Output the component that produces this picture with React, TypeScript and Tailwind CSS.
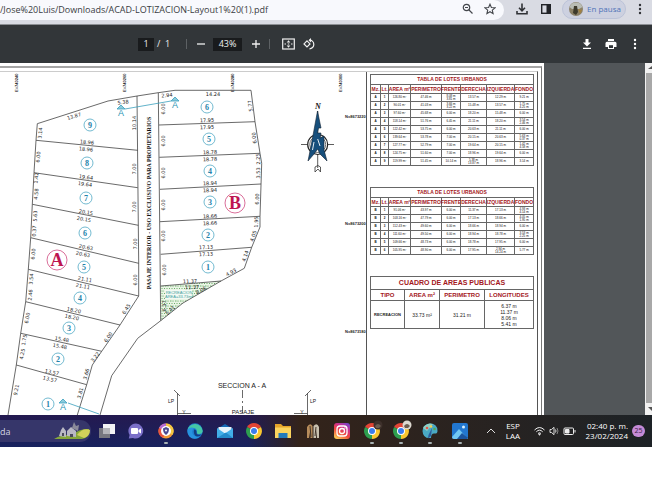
import React from "react";

/* ---------- site plan data ---------- */

type Dim = [number, number, string, number];

const dimensions: Dim[] = [
  [74, 116, "13.87", -18], [123, 102, "5.38", -8], [40, 133, "3.14", -86], [134, 123, "10.14", -90],
  [87, 142, "18.96", 5], [86, 149, "18.96", 5], [38, 157, "6.00", -86], [36, 178, "1.42", -86],
  [36, 194, "4.58", -86], [134, 169, "7.00", -90], [134, 207, "7.00", -90], [86, 177, "19.64", 7],
  [85, 184, "19.64", 7], [86, 212, "20.15", 10], [84, 219, "20.15", 10], [35, 216, "5.63", -87],
  [34, 231, "0.37", -87], [135, 244, "7.00", -90], [135, 280, "6.00", -90], [86, 247, "20.63", 11],
  [83, 254, "20.63", 11], [33, 254, "6.00", -86], [31, 279, "3.54", -86], [85, 279, "21.11", 12],
  [83, 286, "21.11", 12], [30, 295, "2.46", -84], [74, 310, "18.20", 12], [72, 317, "18.20", 12],
  [27, 318, "6.00", -80], [126, 309, "6.45", -57], [108, 337, "6.00", -55], [24, 340, "1.75", -80],
  [22, 354, "4.25", -80], [62, 339, "15.48", 10], [60, 346, "15.48", 10], [95, 357, "3.22", -52],
  [52, 372, "13.57", 13], [50, 379, "13.57", 13], [86, 374, "3.66", -74], [80, 393, "3.81", -74],
  [16, 390, "9.21", -80],
  [167, 95, "2.94", -4], [213, 94, "14.24", 0], [163, 109, "6.00", -90], [163, 141, "6.00", -90],
  [163, 173, "6.00", -90], [163, 205, "6.00", -90], [163, 236, "6.00", -90], [164, 270, "6.00", -90],
  [250, 106, "5.77", -98], [207, 120, "17.95", -2], [207, 127, "17.95", -2], [254, 138, "6.00", -98],
  [210, 152, "18.78", -2], [210, 159, "18.78", -2], [258, 159, "2.25", -93], [258, 173, "3.53", -90],
  [210, 183, "18.94", -2], [210, 190, "18.94", -2], [257, 199, "6.00", -88], [210, 216, "18.66", -2],
  [210, 223, "18.66", -2], [256, 222, "1.95", -88], [253, 236, "4.05", -72], [206, 247, "17.13", -3],
  [206, 254, "17.13", -3], [245, 256, "4.14", -72], [231, 272, "4.93", -28], [190, 281, "11.37", -3],
  [192, 287, "11.37", -3], [201, 290, "8.06", -28], [164, 306, "6.37", -90], [170, 310, "5.41", -42],
];

const lots: [number, number, string][] = [
  [90, 125, "9"], [87, 163, "8"], [86, 198, "7"], [85, 233, "6"], [84, 267, "5"],
  [80, 298, "4"], [69, 328, "3"], [58, 359, "2"], [48, 404, "1"],
  [207, 107, "6"], [209, 139, "5"], [210, 171, "4"], [210, 202, "3"], [208, 235, "2"], [208, 267, "1"],
];

const marks: [number, number][] = [[121, 107], [175, 99], [63, 401]];

function SitePlan() {
  return (
    <svg
      viewBox="0 72 366 343"
      className="h-[343px] w-[366px] shrink-0"
      role="img"
      aria-label="Plano de lotización"
      fill="none"
      stroke="#444"
      strokeWidth="0.8"
    >
      <defs>
        <pattern id="grass" width="5" height="5" patternUnits="userSpaceOnUse">
          <rect width="5" height="5" fill="#eaf5e6" stroke="none" />
          <path d="M0 1h1.5M3 0.5v1.2M1.5 3l1 1M4 3.5h1" stroke="#4d9a4b" strokeWidth="0.8" />
        </pattern>
      </defs>

      {/* coordinate grid labels */}
      <g fontFamily="'Liberation Sans', Arial, sans-serif" fontSize="4" fill="#222" stroke="none" fontWeight="700">
        <text transform="translate(18 92) rotate(-90)">E=740240</text>
        <text transform="translate(126 92) rotate(-90)">E=740260</text>
        <text transform="translate(234 92) rotate(-90)">E=740280</text>
        <text transform="translate(342 92) rotate(-90)">E=740300</text>
        <text x="345" y="118">N=8673220</text>
        <text x="345" y="225">N=8673200</text>
        <text x="345" y="333">N=8673180</text>
      </g>

      {/* block A */}
      <path d="M8 415L16.300 365 20.700 333.300 25.700 301.700 28.300 269.300 30.700 237.700 32.300 204.300 34 172.700 36 140.300 37.300 123.700 108 101 137 96 158.300 92.700 175 90.300H251" />
      <path d="M137 96L138.700 263V296L120 325 101.700 351.300 92.300 365 86.700 384.700 77.300 415" />
      <path d="M36 140.300L137.700 150.300M34 172.700L137.700 187.700M32.300 204.300L138.300 225.300M30.700 237.700L138.700 263.300M28.300 269.300L138.700 296M25.700 301.700L120 325M20.700 333.300L101.700 351.300M16.300 365L86.700 384.700" />

      {/* recreation area */}
      <path d="M160.700 286L221 281 183 303 160.700 320.700Z" fill="url(#grass)" stroke="none" />
      <path d="M165 290H192V299H165Z" fill="#f4faf4" stroke="none" />

      {/* block B */}
      <path d="M251 90.300L255 121.700 260 153.300 261.700 163.300 260 216.700V227L251.700 247.300 244.300 268.300 221 281 183 303 160.700 320.700 137.700 338.300 111.700 375.700 100 415" />
      <path d="M158.300 92.700L160.700 320.700" />
      <path d="M159 125L255 121.700M159.300 157.300L260 153.300M160 189.300L261 184M160 221.700L260 216.300M160.700 254.300L251.700 247.300M160.700 286L221 281" />

      <g fontFamily="'DejaVu Sans', sans-serif" fontSize="5" fill="#1c1c1c" stroke="none" textAnchor="middle">
        {dimensions.map(([x, y, t, r], i) => (
          <text key={i} transform={`translate(${x} ${y}) rotate(${r})`} dy="2">
            {t}
          </text>
        ))}
      </g>

      <g fontFamily="'Liberation Sans', Arial, sans-serif" fontSize="4" fill="#3f9fa0" stroke="none" textAnchor="middle">
        <text x="179" y="294">RECREACION</text>
        <text x="179" y="298">AREA=33.73m²</text>
      </g>

      {/* lot numbers */}
      <g fontFamily="'Liberation Serif', 'Times New Roman', serif" fontSize="8" fontWeight="700" textAnchor="middle">
        {lots.map(([x, y, n], i) => (
          <g key={i}>
            <circle cx={x} cy={y} r="6" stroke="#4fa8c4" fill="#fff" />
            <text x={x} y={y + 3} fill="#2382aa" stroke="none">{n}</text>
          </g>
        ))}
        <g fontSize="18">
          <circle cx="57" cy="260" r="10" stroke="#cf4a80" />
          <circle cx="235" cy="203" r="10" stroke="#cf4a80" />
          <text x="57" y="266" fill="#be1550" stroke="none">A</text>
          <text x="235" y="209" fill="#be1550" stroke="none">B</text>
        </g>
      </g>

      {/* section marks */}
      <g stroke="#3a9fbc">
        <path d="M125 109L171 101M68 403L99 414" />
        {marks.map(([x, y], i) => (
          <g key={i}>
            <path d={`M${x - 4} ${y + 2}L${x} ${y - 2} ${x + 4} ${y + 2}Z`} fill="#8ccbdc" />
            <text
              x={x} y={y + 9} textAnchor="middle" fill="#2a93b3" stroke="none"
              fontFamily="'Liberation Sans', Arial, sans-serif" fontSize="9"
            >
              A
            </text>
          </g>
        ))}
      </g>

      <text
        transform="translate(151 203) rotate(-90)" textAnchor="middle" fill="#111" stroke="none"
        fontFamily="'Liberation Serif', 'Times New Roman', serif" fontSize="6" fontWeight="700"
      >
        PASAJE INTERIOR - USO EXCLUSIVO PARA PROPIETARIOS
      </text>

      {/* north arrow */}
      <text
        x="318" y="109" textAnchor="middle" fill="#111" stroke="none" fontStyle="italic"
        fontFamily="'Liberation Serif', serif" fontSize="8" fontWeight="700"
      >
        N
      </text>
      <path d="M301 144.500H334M317.700 111V168" stroke="#333" />
      <circle cx="317.700" cy="144.500" r="10" fill="#fff" stroke="#222" strokeWidth="1.200" />
      <circle cx="317.700" cy="144.500" r="8" stroke="#333" strokeWidth="0.700" />
      <path d="M317.500 111L321 128H318.500L317.500 133H321L320 138 324 136V150L327 161 320 154 317.700 149 314 154 308 161 311 146 314 130Z" fill="#174f7c" stroke="#123" strokeWidth="0.600" />
      <path d="M317.700 139L320 146M312.500 150L314 142" stroke="#fff" strokeWidth="0.900" />
      <path d="M315 172V167Q318 164 320.500 167V172L318 169Z" stroke="#333" />

      {/* section A - A */}
      <g stroke="#444">
        <path d="M174 390L180 396M177.500 393V415M177.500 413.500H191M311 390L305 396M307.500 393V415M294 413.500H307.500" />
        <path d="M242.500 390V413" strokeDasharray="8 3 2 3" />
      </g>
      <g fontFamily="'Liberation Sans', Arial, sans-serif" fill="#222" stroke="none" textAnchor="middle">
        <text x="242" y="388" fontSize="7">SECCION A - A</text>
        <text x="171" y="403" fontSize="5">LP</text>
        <text x="313" y="403" fontSize="5">LP</text>
        <text x="243" y="414" fontSize="6">PASAJE</text>
        <text x="184" y="414" fontSize="5">Y</text>
        <text x="302" y="414" fontSize="5">Y</text>
      </g>
    </svg>
  );
}

/* ---------- tables ---------- */

const lotHeads = ["Mz.", "Lt.", "AREA m²", "PERIMETRO", "FRENTE", "DERECHA", "IZQUIERDA", "FONDO"];

const blockA = [
  ["A", "1", "126.80 m²", "47.46 m", "8.08 m/3.81 m", "13.57 m", "12.29 m", "9.21 m"],
  ["A", "2", "90.01 m²", "41.03 m", "3.66 m/3.22 m", "15.48 m", "13.57 m", "1.75 m/4.25 m"],
  ["A", "3", "97.60 m²", "45.68 m", "6.00 m", "18.20 m", "15.48 m", "6.00 m"],
  ["A", "4", "118.14 m²", "51.76 m", "6.45 m", "21.11 m", "18.20 m", "3.54 m/2.46 m"],
  ["A", "5", "122.42 m²", "53.75 m", "6.00 m", "20.63 m", "21.11 m", "6.00 m"],
  ["A", "6", "139.64 m²", "53.78 m", "7.00 m", "20.15 m", "20.63 m", "5.63 m/0.37 m"],
  ["A", "7", "127.77 m²", "52.79 m", "7.00 m", "19.64 m", "20.15 m", "1.42 m/4.58 m"],
  ["A", "8", "124.75 m²", "51.60 m", "7.00 m", "18.96 m", "19.64 m", "6.00 m"],
  ["A", "9", "119.99 m²", "51.45 m", "10.14 m", "5.38 m/13.87 m", "18.96 m", "3.14 m"],
];

const blockB = [
  ["B", "1", "91.06 m²", "43.97 m", "6.00 m", "11.37 m", "17.13 m", "4.93 m/4.14 m"],
  ["B", "2", "103.16 m²", "47.79 m", "6.00 m", "17.13 m", "18.66 m", "4.05 m/1.95 m"],
  ["B", "3", "112.43 m²", "49.60 m", "6.00 m", "18.66 m", "18.94 m", "6.00 m"],
  ["B", "4", "111.60 m²", "49.50 m", "6.00 m", "18.94 m", "18.78 m", "3.53 m/2.25 m"],
  ["B", "5", "109.66 m²", "48.73 m", "6.00 m", "18.78 m", "17.95 m", "6.00 m"],
  ["B", "6", "105.95 m²", "48.90 m", "6.00 m", "17.95 m", "2.94 m/14.24 m", "5.77 m"],
];

const cell = "border border-[#666] p-0 text-center align-middle whitespace-nowrap";

function LotTable({ rows }: { rows: string[][] }) {
  return (
    <table className="w-[163px] table-fixed border-collapse text-[3px] leading-[3px] text-[#111]">
      <colgroup>
        <col className="w-[10px]" />
        <col className="w-[8px]" />
        <col className="w-[22px]" />
        <col className="w-[31px]" />
        <col className="w-[19px]" />
        <col className="w-[26px]" />
        <col className="w-[28px]" />
        <col className="w-[19px]" />
      </colgroup>
      <thead className="text-[5px] leading-[5px] font-bold text-[#a3171c]">
        <tr className="h-[10px]">
          <th colSpan={8} className={cell}>TABLA DE LOTES URBANOS</th>
        </tr>
        <tr className="h-[9px]">
          {lotHeads.map((h) => (
            <th key={h} className={cell}>
              <span className="flex justify-center">{h}</span>
            </th>
          ))}
        </tr>
      </thead>
      <tbody>
        {rows.map((r) => (
          <tr key={r[1]} className="h-[8px]">
            {r.map((c, i) => (
              <td key={i} className={i < 2 ? cell + " font-bold" : cell}>
                {c.split("/").map((part) => (
                  <span key={part} className="block">{part}</span>
                ))}
              </td>
            ))}
          </tr>
        ))}
      </tbody>
    </table>
  );
}

function AreasTable() {
  return (
    <table className="w-[163px] table-fixed border-collapse text-[5px] leading-[6px] text-[#222]">
      <colgroup>
        <col className="w-[34px]" />
        <col className="w-[35px]" />
        <col className="w-[45px]" />
        <col className="w-[49px]" />
      </colgroup>
      <thead className="text-[6px] leading-[6px] font-bold text-[#a3171c]">
        <tr className="h-[13px]">
          <th colSpan={4} className={cell + " text-[7px]"}>CUADRO DE AREAS PUBLICAS</th>
        </tr>
        <tr className="h-[11px]">
          {["TIPO", "AREA m²", "PERIMETRO", "LONGITUDES"].map((h) => (
            <th key={h} className={cell}>{h}</th>
          ))}
        </tr>
      </thead>
      <tbody>
        <tr className="h-[28px]">
          <td className={cell + " text-[4px] font-bold"}>RECREACION</td>
          <td className={cell}>33.73 m²</td>
          <td className={cell}>31.21 m</td>
          <td className={cell}>
            {["6.37 m", "11.37 m", "8.06 m", "5.41 m"].map((v) => (
              <span key={v} className="block">{v}</span>
            ))}
          </td>
        </tr>
      </tbody>
    </table>
  );
}

/* ---------- browser chrome ---------- */

const iconBtn = "flex shrink-0 items-center justify-center";

function Dots({ color }: { color: string }) {
  return (
    <svg viewBox="0 0 4 12" className="h-3 w-1" fill={color}>
      <circle cx="2" cy="2" r="1.200" />
      <circle cx="2" cy="6" r="1.200" />
      <circle cx="2" cy="10" r="1.200" />
    </svg>
  );
}

function AddressBar() {
  return (
    <header className="flex h-[25px] items-start border-b border-[#8c8f94] bg-[#d9dbe3]">
      <div className="flex h-5 min-w-0 flex-1 items-center rounded-r-full bg-[#f8f9fd] pr-2">
        <input
          aria-label="Dirección"
          readOnly
          value="/Jose%20Luis/Downloads/ACAD-LOTIZACION-Layout1%20(1).pdf"
          className="h-4 min-w-0 flex-1 bg-transparent pb-0.5 font-['Open_Sans','Noto_Sans',sans-serif] text-[9px] text-[#3a3d42] outline-none"
        />
        <button aria-label="Zoom" className={`${iconBtn} mr-2.5 mb-0.5 h-3 w-3`}>
          <svg viewBox="0 0 12 12" className="h-3 w-3" fill="none" stroke="#44474c" strokeWidth="1.200">
            <circle cx="4.500" cy="4.500" r="3.200" />
            <path d="M7 7L10.500 10.500M3 4.500h3" />
          </svg>
        </button>
        <button aria-label="Marcador" className={`${iconBtn} mb-0.5 h-3 w-3`}>
          <svg viewBox="0 0 12 12" className="h-3 w-3" fill="none" stroke="#44474c" strokeWidth="1.100">
            <path d="M6 1.200L7.400 4.500 11 4.800 8.300 7.100 9.100 10.600 6 8.700 2.900 10.600 3.700 7.100 1 4.800 4.600 4.500Z" />
          </svg>
        </button>
      </div>
      <div className="flex h-[18px] shrink-0 items-center pr-2.5 pl-3">
        <button aria-label="Descargas" className={`${iconBtn} mr-3 h-3 w-3`}>
          <svg viewBox="0 0 12 12" className="h-3 w-3" fill="none" stroke="#303236" strokeWidth="1.600">
            <path d="M6 0.500V7.500M3 4.800L6 7.800 9 4.800M1 8V10.800H11V8" />
          </svg>
        </button>
        <button aria-label="Panel lateral" className={`${iconBtn} mr-2.5 h-3 w-3`}>
          <svg viewBox="0 0 12 12" className="h-3 w-3">
            <rect x="1.700" y="1.700" width="8.600" height="8.600" fill="none" stroke="#222428" strokeWidth="1.400" />
            <rect x="6.500" y="1.500" width="4" height="9" fill="#222428" />
          </svg>
        </button>
        <button className="mr-3 flex h-5 w-16 items-center gap-1 rounded-full border border-[#bcc3d8] bg-[#cdd1e0] pl-1.5 font-['Open_Sans','Noto_Sans',sans-serif] text-[8px] whitespace-nowrap text-[#4f74b8]">
          <svg viewBox="0 0 14 14" className="h-3.5 w-3.5 shrink-0">
            <circle cx="7" cy="7" r="7" fill="#8b8168" />
            <path d="M0.500 5A7 7 0 0 1 13.500 5L10 7H3Z" fill="#b9bcb4" />
            <path d="M5 4H8L9 10 7 13 4 11Z" fill="#3d3a2c" />
            <path d="M9 7L13 8 11 12Z" fill="#a3813f" />
          </svg>
          En pausa
        </button>
        <button aria-label="Menú" className={iconBtn}>
          <Dots color="#303236" />
        </button>
      </div>
    </header>
  );
}

function PdfToolbar() {
  return (
    <div className="flex h-[38px] items-center justify-between bg-[#323639] pr-[15px] pl-[138px] font-['Open_Sans','Noto_Sans',sans-serif] text-[9px] text-[#f0f0f0]">
      <div className="flex items-center">
        <input aria-label="Página" defaultValue="1" className="h-[13px] w-4 bg-[#191b1d] text-center outline-none" />
        <span className="ml-[3px] w-[29px] whitespace-pre">/  1</span>
        <span className="h-2.5 w-px bg-[#5d6164]" />
        <button aria-label="Reducir" className={`${iconBtn} ml-2 h-3 w-3`}>
          <svg viewBox="0 0 12 12" className="h-3 w-3" stroke="#f0f0f0" strokeWidth="1.300"><path d="M2 6H10" /></svg>
        </button>
        <input aria-label="Nivel de zoom" defaultValue="43%" className="ml-[6px] h-[13px] w-[29px] bg-[#191b1d] text-center outline-none" />
        <button aria-label="Ampliar" className={`${iconBtn} ml-2 h-3 w-3`}>
          <svg viewBox="0 0 12 12" className="h-3 w-3" stroke="#f0f0f0" strokeWidth="1.300"><path d="M2 6H10M6 2V10" /></svg>
        </button>
        <span className="ml-[7px] h-2.5 w-px bg-[#5d6164]" />
        <button aria-label="Ajustar a la página" className={`${iconBtn} ml-3 h-3 w-[13px]`}>
          <svg viewBox="0 0 13 12" className="h-3 w-[13px]" fill="none" stroke="#f0f0f0" strokeWidth="1.200">
            <rect x="0.700" y="1" width="11.600" height="10" />
            <path d="M6.500 2.300L8.300 4.400H4.700ZM6.500 9.700L4.700 7.600H8.300Z" fill="#f0f0f0" stroke="none" />
            <path d="M2.500 6H4M5.800 6H7.200M9 6H10.500" />
          </svg>
        </button>
        <button aria-label="Girar" className={`${iconBtn} ml-2 h-3 w-3`}>
          <svg viewBox="0 0 12 12" className="h-3 w-3" fill="none" stroke="#f0f0f0" strokeWidth="1.200">
            <path d="M4 2.800L7 5.900 4 9 1 5.900Z" />
            <path d="M6.500 2.200A4.300 4.300 0 1 1 6.500 10.800" />
            <path d="M8 0L5.500 2.200 8 4.400Z" fill="#f0f0f0" stroke="none" />
          </svg>
        </button>
      </div>
      <div className="flex items-center">
        <button aria-label="Descargar" className={`${iconBtn} mr-3 h-3 w-3`}>
          <svg viewBox="0 0 12 12" className="h-3 w-3" fill="#fff"><path d="M4.500 1H7.500V4.500H10L6 8.500 2 4.500H4.500ZM2 9.700H10V11H2Z" /></svg>
        </button>
        <button aria-label="Imprimir" className={`${iconBtn} mr-4 h-3 w-3`}>
          <svg viewBox="0 0 12 12" className="h-3 w-3" fill="#fff">
            <path d="M3 1H9V3H3ZM2 3.700H10A1.500 1.500 0 0 1 11.500 5.200V9H9V11H3V9H0.500V5.200A1.500 1.500 0 0 1 2 3.700Z" />
            <path d="M4 7.200H8V10H4Z" fill="#323639" />
          </svg>
        </button>
        <button aria-label="Más acciones" className={iconBtn}>
          <Dots color="#fff" />
        </button>
      </div>
    </div>
  );
}

function Viewer() {
  return (
    <main className="flex h-[352px] overflow-hidden bg-[#525659]">
      <div className="flex shrink-0 bg-white pt-[3px] pr-[2px] font-['Liberation_Sans',Arial,sans-serif]">
        <div className="border-t-2 border-r border-t-[#a5a5a5] border-r-[#777] pt-[3px] pr-[3px]">
          <div className="flex border-t border-r border-t-[#ccc] border-r-[#555]">
            <SitePlan />
            <div className="flex h-[343px] flex-col border-l border-[#555] pt-0.5 pr-[3px] pl-[3px]">
              <LotTable rows={blockA} />
              <div className="h-[21px]" />
              <LotTable rows={blockB} />
              <div className="h-[21px]" />
              <AreasTable />
            </div>
          </div>
        </div>
      </div>
      <div className="flex-1" />
      <div className="flex w-[7px] shrink-0 flex-col bg-[#f1f1f1]">
        <svg viewBox="0 0 7 10" className="h-2.5 w-[7px]"><path d="M3 6H7V3Z" fill="#555" /></svg>
        <div className="ml-px flex-1 bg-[#a8a8a8]" />
        <svg viewBox="0 0 7 12" className="h-3 w-[7px]"><path d="M3 4H7V8Z" fill="#555" /></svg>
      </div>
    </main>
  );
}

/* ---------- taskbar ---------- */

const ico = "h-4 w-4";

function ChromeIcon({ badge }: { badge?: string }) {
  return (
    <svg viewBox="0 0 16 16" className="h-4 w-4 overflow-visible">
      <path d="M8 8L1.100 4A8 8 0 0 1 14.900 4Z" fill="#e24435" />
      <path d="M8 8L14.900 4A8 8 0 0 1 8 16Z" fill="#f9c72f" />
      <path d="M8 8V16A8 8 0 0 1 1.100 4Z" fill="#2d9e4f" />
      <circle cx="8" cy="8" r="4" fill="#fff" />
      <circle cx="8" cy="8" r="3" fill="#3b7ded" />
      {badge && <circle cx="14" cy="2" r="4.500" fill={badge} />}
      {badge && <path d="M11 3Q14 -1 17 3L15 5H12Z" fill="#6b5c50" />}
    </svg>
  );
}

const apps: { name: string; running?: boolean; icon: React.ReactNode }[] = [
  {
    name: "Vista de tareas",
    icon: (
      <svg viewBox="0 0 16 16" className={ico}>
        <rect x="0" y="5" width="11" height="10" fill="#77777f" />
        <rect x="4" y="1" width="12" height="10" fill="#f3f3f5" />
        <rect x="4" y="5" width="7" height="6" fill="#b5b5ba" />
      </svg>
    ),
  },
  {
    name: "Chat",
    icon: (
      <svg viewBox="0 0 16 16" className={ico}>
        <path d="M8 0.500A7.500 7.500 0 1 1 5 15L0.800 15.500 1.600 12A7.500 7.500 0 0 1 8 0.500Z" fill="#7a6fc8" />
        <rect x="3" y="5" width="7" height="6" rx="1" fill="#fff" />
        <path d="M10.500 7L13 5.500V10.500L10.500 9Z" fill="#fff" />
      </svg>
    ),
  },
  {
    name: "Navegador seguro",
    running: true,
    icon: (
      <svg viewBox="0 0 16 16" className={ico}>
        <circle cx="8" cy="8" r="7.500" fill="#f09a35" />
        <path d="M8 0.500A7.500 7.500 0 0 1 14.500 12L8 8Z" fill="#f4c742" />
        <path d="M1 5A7.500 7.500 0 0 1 8 0.500V8Z" fill="#b76bd3" />
        <path d="M1 5A7.500 7.500 0 0 0 5 15L8 8Z" fill="#e8533f" />
        <circle cx="8" cy="8" r="5" fill="#fff" />
        <path d="M8 4L11 5.500Q11 10 8 12Q5 10 5 5.500Z" fill="#4c4b91" />
        <circle cx="8" cy="7.500" r="1" fill="#fff" />
      </svg>
    ),
  },
  {
    name: "Edge",
    icon: (
      <svg viewBox="0 0 16 16" className={ico}>
        <circle cx="8" cy="8" r="7.700" fill="#1c7ed0" />
        <path d="M0.500 7A7.700 7.700 0 0 1 15.700 8Q15.500 11 12 11Q9.500 11 10 9Q10 5 6 5Q2 5 0.500 7Z" fill="#45c7a5" />
        <path d="M0.500 7Q3 3.500 7 5Q4.500 7 5.500 10.500Q7 14 12.500 14Q9 16.500 5 15.200Q0 13 0.500 7Z" fill="#2793df" />
        <path d="M7 6.500Q9.500 6.500 9.500 9Q9 11.500 12 11.700Q14 11.700 15 11Q13 13.500 10 13.500Q6 12.500 7 6.500Z" fill="#123f83" />
      </svg>
    ),
  },
  {
    name: "Correo",
    icon: (
      <svg viewBox="0 0 16 16" className={ico}>
        <path d="M0 6L8 1 16 6V15H0Z" fill="#1268b3" />
        <path d="M1.500 4H14.500V10H1.500Z" fill="#e3f2fb" />
        <path d="M0 5L8 10.500 16 5V15H0Z" fill="#42aee8" />
        <path d="M0 15L9 9.500 16 15Z" fill="#238acb" />
      </svg>
    ),
  },
  { name: "Chrome", icon: <ChromeIcon /> },
  {
    name: "Explorador de archivos",
    icon: (
      <svg viewBox="0 0 16 16" className={ico}>
        <path d="M0 1H6L8 3H16V15H0Z" fill="#e5a52a" />
        <path d="M0 4.500H16V15H0Z" fill="#fbd45e" />
        <path d="M3.500 10H12.500V15H3.500Z" fill="#247bbb" />
      </svg>
    ),
  },
  {
    name: "Juego",
    icon: (
      <svg viewBox="0 0 16 16" className={ico}>
        <path d="M2 4Q5 -1 7.500 3V15H5.500V6L4 15H2Z" fill="#b78c5b" />
        <path d="M8.500 3Q12 -1 14 4V15H12L11 6V15H8.500Z" fill="#c9c0ae" />
        <path d="M5 3L6 14M11 4L10 13" stroke="#423429" />
      </svg>
    ),
  },
  {
    name: "Instagram",
    icon: (
      <svg viewBox="0 0 16 16" className={ico}>
        <defs>
          <linearGradient id="insta" x1="0.200" y1="1" x2="0.800" y2="0">
            <stop offset="0" stopColor="#fccc54" />
            <stop offset="0.400" stopColor="#f0493c" />
            <stop offset="0.700" stopColor="#cf2f8b" />
            <stop offset="1" stopColor="#7843c9" />
          </linearGradient>
        </defs>
        <rect width="16" height="16" rx="3" fill="url(#insta)" />
        <rect x="3" y="3" width="10" height="10" rx="3" fill="none" stroke="#fff" strokeWidth="1.300" />
        <circle cx="8" cy="8" r="2.500" fill="none" stroke="#fff" strokeWidth="1.300" />
        <circle cx="11" cy="5" r="0.700" fill="#fff" />
      </svg>
    ),
  },
  { name: "Chrome, perfil 1", running: true, icon: <ChromeIcon badge="#3d302b" /> },
  { name: "Chrome, perfil 2", running: true, icon: <ChromeIcon badge="#dcd8d0" /> },
  {
    name: "Paint",
    running: true,
    icon: (
      <svg viewBox="0 0 16 16" className={ico}>
        <path d="M8 0.500Q15.500 0.500 15.500 8Q15.500 11 12 10.500Q9 10.500 9 15Q1 16 0.500 8Q1 1 8 0.500Z" fill="#4aa9c4" />
        <path d="M1 5Q3 1 8 0.500L11 1 5 8Z" fill="#8fd0c4" />
        <circle cx="5" cy="5" r="1.300" fill="#e2594b" />
        <circle cx="9" cy="3.500" r="1.300" fill="#f4d04e" />
        <circle cx="12.500" cy="6" r="1.300" fill="#55aa54" />
        <path d="M10 5L6.500 12 6 15.500 9 13Z" fill="#2c5b9c" />
      </svg>
    ),
  },
  {
    name: "Fotos",
    running: true,
    icon: (
      <svg viewBox="0 0 16 16" className={ico}>
        <rect width="16" height="16" rx="2" fill="#2277cf" />
        <path d="M0 14L7 6 16 16H2Q0 16 0 14Z" fill="#71c7f2" />
        <path d="M5 16L10 10 16 15 15 16Z" fill="#1b559f" />
        <circle cx="11.500" cy="4" r="1.500" fill="#d9f0ff" />
      </svg>
    ),
  },
];

function Taskbar() {
  return (
    <footer className="flex h-8 items-center bg-linear-to-b from-[#241a50] to-[#17225e] font-['Open_Sans','Noto_Sans',sans-serif] text-white">
      <div className="flex h-full w-full items-center bg-linear-to-r from-transparent from-38% via-[#33231a] via-46% to-[#1d2226]">
        <label className="flex h-[22px] w-[91px] shrink-0 items-center rounded-r-full bg-[#36366a]">
          <input
            aria-label="Búsqueda"
            defaultValue="da"
            className="h-4 w-[54px] min-w-0 bg-transparent text-[9px] text-[#d4d4e0] outline-none"
          />
          <svg viewBox="0 0 37 18" className="h-[18px] w-[37px]">
            <path d="M0 17Q9 12 18 13Q26 6 35 7Q37 15 28 17Z" fill="#86a83a" />
            <path d="M23 13Q29 5 36 8Q36 14 30 16Z" fill="#d2d15a" />
            <path d="M5 14L7 8 9 5 12 9V15ZM13 14V9L17 5 22 9V15Z" fill="#b9b9c4" />
            <path d="M18 6L20 0 22 4 25 3 24 9Z" fill="#8b8b9a" />
            <path d="M16 15V12H19V15ZM8 14V11H10V14Z" fill="#4b4b5c" />
          </svg>
        </label>
        <nav className="flex min-w-0 flex-1 items-center justify-between pr-[14px] pl-2">
          {apps.map((a) => (
            <button key={a.name} aria-label={a.name} className="flex h-8 w-4 flex-col items-center pt-2">
              {a.icon}
              {a.running && <span className="mt-[3px] h-0.5 w-1 shrink-0 rounded-full bg-[#a9b3b5]" />}
            </button>
          ))}
        </nav>
        <div className="flex shrink-0 items-center pr-[7px] text-[8px] leading-[10px]">
          <button aria-label="Mostrar iconos ocultos" className={`${iconBtn} mr-2 ml-1 h-3 w-2.5`}>
            <svg viewBox="0 0 10 12" className="h-3 w-2.5" fill="none" stroke="#e0e0e0"><path d="M1 8L5 4 9 8" /></svg>
          </button>
          <button className="mr-3 w-[18px] text-center">
            <span className="block">ESP</span>
            <span className="block">LAA</span>
          </button>
          <button aria-label="Red, volumen y batería" className="mr-2.5 flex items-center gap-1">
            <svg viewBox="0 0 11 10" className="h-2.5 w-[11px]" fill="none" stroke="#eee">
              <path d="M0.500 4Q5.500 -1 10.500 4M2.300 5.800Q5.500 2.500 8.700 5.800M4 7.500Q5.500 6 7 7.500" />
              <circle cx="5.500" cy="8.500" r="0.600" fill="#eee" />
            </svg>
            <svg viewBox="0 0 10 10" className="h-2.5 w-2.5" fill="none" stroke="#ddd">
              <path d="M1 3.500H2.500L5 1.300V8.700L2.500 6.500H1ZM6.500 3.500Q7.500 5 6.500 6.500" />
              <path d="M8 2Q10 5 8 8" stroke="#888" />
            </svg>
            <svg viewBox="0 0 13 10" className="h-2.5 w-[13px]" fill="none" stroke="#eee">
              <rect x="1" y="2" width="9.500" height="6.500" rx="1" />
              <path d="M2.500 3.500H6V7H2.500Z" fill="#eee" />
              <path d="M12 4V6.500" />
            </svg>
          </button>
          <button className="mr-1 w-[42px] text-right whitespace-nowrap">
            <span className="flex justify-end">02:40 p. m.</span>
            <span className="flex justify-end">23/02/2024</span>
          </button>
          <button className="flex h-3 w-[13px] items-center justify-center rounded-full bg-[#c58bd8] text-[7px] text-[#3a2145]">
            25
          </button>
        </div>
      </div>
    </footer>
  );
}

export default function App() {
  return (
    <div className="min-h-screen bg-white">
      <AddressBar />
      <PdfToolbar />
      <Viewer />
      <Taskbar />
    </div>
  );
}
